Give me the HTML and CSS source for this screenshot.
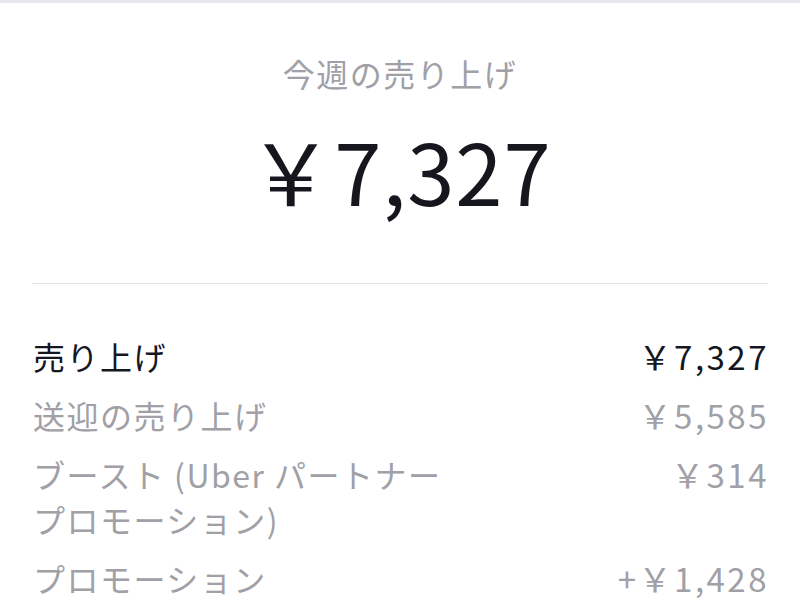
FILE: index.html
```html
<!DOCTYPE html>
<html lang="ja">
<head>
    <meta charset="utf-8">
    <title>今週の売り上げ</title>
    <link rel="stylesheet" href="styles.css">
</head>
<body>
    <div class="topbar"></div>

    <div class="summary">
        <div class="title">今週の売り上げ</div>
        <div class="total">￥7,327</div>
    </div>

    <div class="divider"></div>

    <div class="breakdown">
        <div class="row main">
            <div class="label">売り上げ</div>
            <div class="value">￥7,327</div>
        </div>
        <div class="row">
            <div class="label">送迎の売り上げ</div>
            <div class="value">￥5,585</div>
        </div>
        <div class="row">
            <div class="label">ブースト (Uber パートナープロモーション)</div>
            <div class="value">￥314</div>
        </div>
        <div class="row">
            <div class="label">プロモーション</div>
            <div class="value">+￥1,428</div>
        </div>
    </div>
</body>
</html>
```

FILE: styles.css
```css
body {
    font-family: "Noto Sans CJK JP", "Noto Sans", sans-serif;
    margin: 0;
    padding: 0;
    background-color: #ffffff;
    color: #16161e;
}
.topbar {
    height: 3px;
    background-color: #e6e6ec;
}
.summary {
    text-align: center;
    padding-top: 48px;
}
.title {
    font-size: 32px;
    line-height: 45px;
    letter-spacing: 1.5px;
    color: #a0a0a6;
}
.total {
    font-size: 85px;
    line-height: 100px;
    letter-spacing: 1px;
    margin-top: 23px;
    margin-bottom: 64px;
}
.divider {
    height: 1px;
    margin: 0 32px;
    background-color: #e4e4e4;
}
.breakdown {
    display: flex;
    flex-direction: column;
    gap: 14px;
    padding: 50px 33px 0 33px;
}
.row {
    display: flex;
    justify-content: space-between;
    align-items: flex-start;
    font-size: 32px;
    line-height: 45px;
    letter-spacing: 1.5px;
    color: #a0a0a6;
}
.row.main {
    color: #16161e;
}
.label {
    max-width: 425px;
}
.value {
    text-align: right;
    white-space: nowrap;
    font-size: 33px;
    letter-spacing: 2.5px;
    margin-right: -2px;
}
```
